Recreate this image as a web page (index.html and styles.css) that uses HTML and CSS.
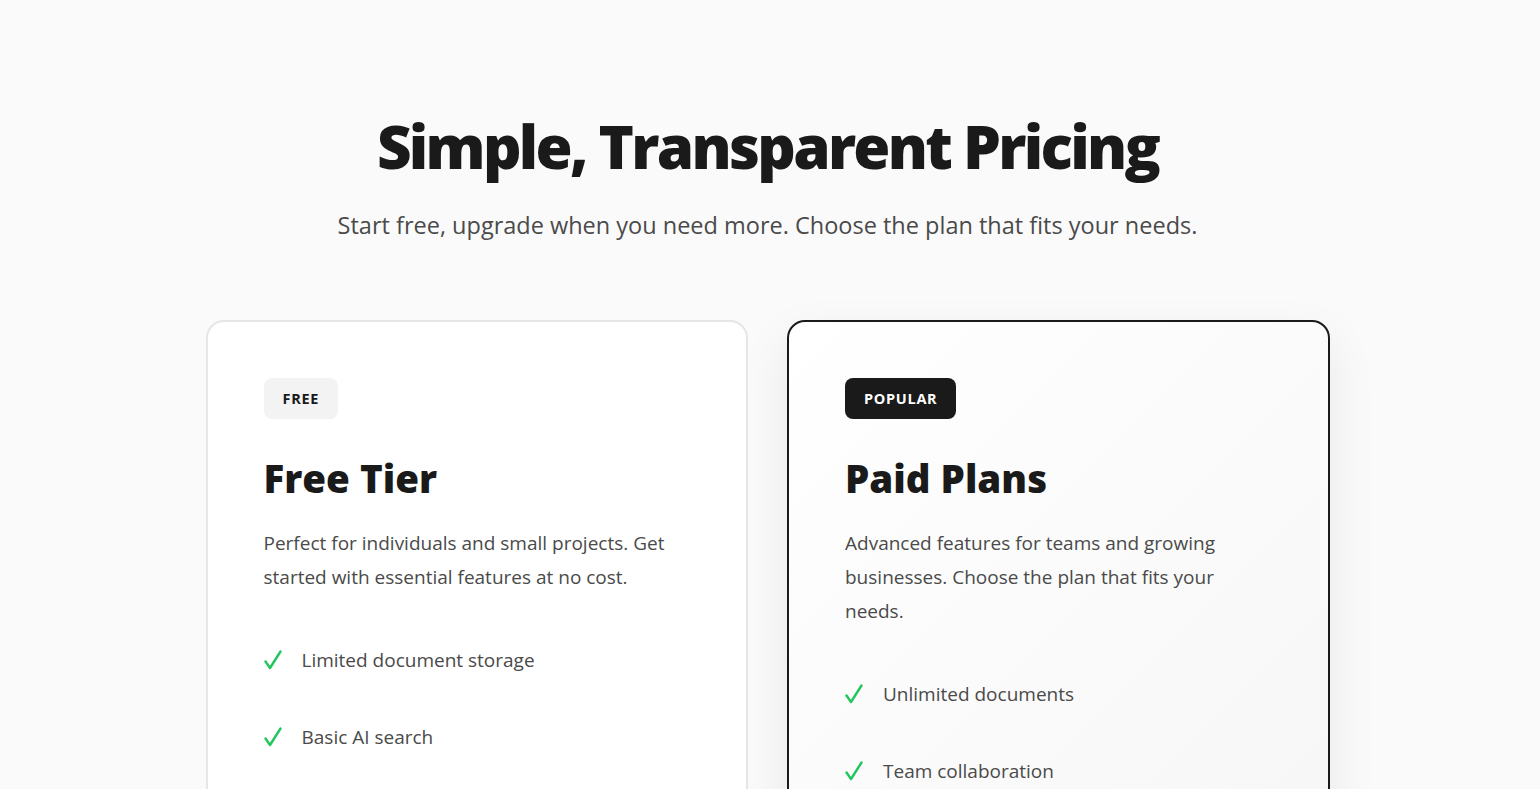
FILE: index.html
```html
<!DOCTYPE html>
<html lang="en">
<head>
<meta charset="utf-8">
<title>Pricing</title>
<link rel="stylesheet" href="styles.css">
</head>
<body>
<main class="pricing">
  <header class="pricing-head">
    <h1 class="pricing-title">Simple, Transparent Pricing</h1>
    <p class="pricing-sub">Start free, upgrade when you need more. Choose the plan that fits your needs.</p>
  </header>
  <section class="plans">
    <article class="plan">
      <span class="badge">FREE</span>
      <h2 class="plan-title">Free Tier</h2>
      <p class="plan-desc">Perfect for individuals and small projects. Get started with essential features at no cost.</p>
      <ul class="features">
        <li class="feature"><svg class="check" viewBox="0 0 18 20" width="18" height="20"><path d="M1.5 11.5 L6 18 L16.5 1.5" fill="none" stroke="#22c55e" stroke-width="2.4" stroke-linecap="round" stroke-linejoin="round"/></svg><span>Limited document storage</span></li>
        <li class="feature"><svg class="check" viewBox="0 0 18 20" width="18" height="20"><path d="M1.5 11.5 L6 18 L16.5 1.5" fill="none" stroke="#22c55e" stroke-width="2.4" stroke-linecap="round" stroke-linejoin="round"/></svg><span>Basic AI search</span></li>
        <li class="feature"><svg class="check" viewBox="0 0 18 20" width="18" height="20"><path d="M1.5 11.5 L6 18 L16.5 1.5" fill="none" stroke="#22c55e" stroke-width="2.4" stroke-linecap="round" stroke-linejoin="round"/></svg><span>Community support</span></li>
      </ul>
    </article>
    <article class="plan plan-popular">
      <span class="badge badge-dark">POPULAR</span>
      <h2 class="plan-title">Paid Plans</h2>
      <p class="plan-desc">Advanced features for teams and growing businesses. Choose the plan that fits your needs.</p>
      <ul class="features">
        <li class="feature"><svg class="check" viewBox="0 0 18 20" width="18" height="20"><path d="M1.5 11.5 L6 18 L16.5 1.5" fill="none" stroke="#22c55e" stroke-width="2.4" stroke-linecap="round" stroke-linejoin="round"/></svg><span>Unlimited documents</span></li>
        <li class="feature"><svg class="check" viewBox="0 0 18 20" width="18" height="20"><path d="M1.5 11.5 L6 18 L16.5 1.5" fill="none" stroke="#22c55e" stroke-width="2.4" stroke-linecap="round" stroke-linejoin="round"/></svg><span>Team collaboration</span></li>
        <li class="feature"><svg class="check" viewBox="0 0 18 20" width="18" height="20"><path d="M1.5 11.5 L6 18 L16.5 1.5" fill="none" stroke="#22c55e" stroke-width="2.4" stroke-linecap="round" stroke-linejoin="round"/></svg><span>Advanced AI search</span></li>
      </ul>
    </article>
  </section>
</main>
</body>
</html>
```

FILE: styles.css
```css
* { box-sizing: border-box; }
html, body { margin: 0; padding: 0; }
body {
  background: #fafafa;
  color: #1a1a1a;
  font-family: "Open Sans", "Noto Sans", sans-serif;
  padding-right: 5px;
}
.pricing {
  max-width: 1124px;
  margin: 0 auto;
  padding: 110px 0 80px;
}
.pricing-head {
  text-align: center;
}
.pricing-title {
  margin: 0;
  font-size: 60px;
  line-height: 1.2;
  font-weight: 800;
  letter-spacing: -2.7px;
  color: #1a1a1a;
}
.pricing-sub {
  margin: 26px 0 0;
  font-size: 23.5px;
  line-height: 1.5;
  color: #4a4a4a;
}
.plans {
  display: grid;
  grid-template-columns: 1fr 1fr;
  gap: 39px;
  margin-top: 77px;
}
.plan {
  background: #ffffff;
  border: 2px solid #e6e6e6;
  border-radius: 18px;
  padding: 56px 56px 60px;
}
.plan-popular {
  border-color: #1a1a1a;
  background: linear-gradient(135deg, #ffffff 0%, #f6f6f6 100%);
  box-shadow: 0 20px 50px rgba(0, 0, 0, 0.08);
}
.badge {
  display: inline-block;
  padding: 10px 19px;
  border-radius: 8px;
  background: #f3f3f3;
  color: #1a1a1a;
  font-size: 14.5px;
  line-height: 21px;
  font-weight: 700;
  letter-spacing: 0.7px;
}
.badge-dark {
  background: #1a1a1a;
  color: #ffffff;
}
.plan-title {
  margin: 36px 0 0;
  font-size: 38.5px;
  line-height: 1.2;
  font-weight: 800;
  color: #1a1a1a;
}
.plan-desc {
  margin: 25px 0 0;
  font-size: 19px;
  line-height: 34px;
  color: #4a4a4a;
}
.features {
  list-style: none;
  margin: 50px 0 0;
  padding: 0;
  display: flex;
  flex-direction: column;
  gap: 45px;
}
.feature {
  display: flex;
  align-items: center;
  gap: 20px;
  font-size: 19px;
  line-height: 32px;
  color: #4a4a4a;
}
.check { flex: none; }
```
